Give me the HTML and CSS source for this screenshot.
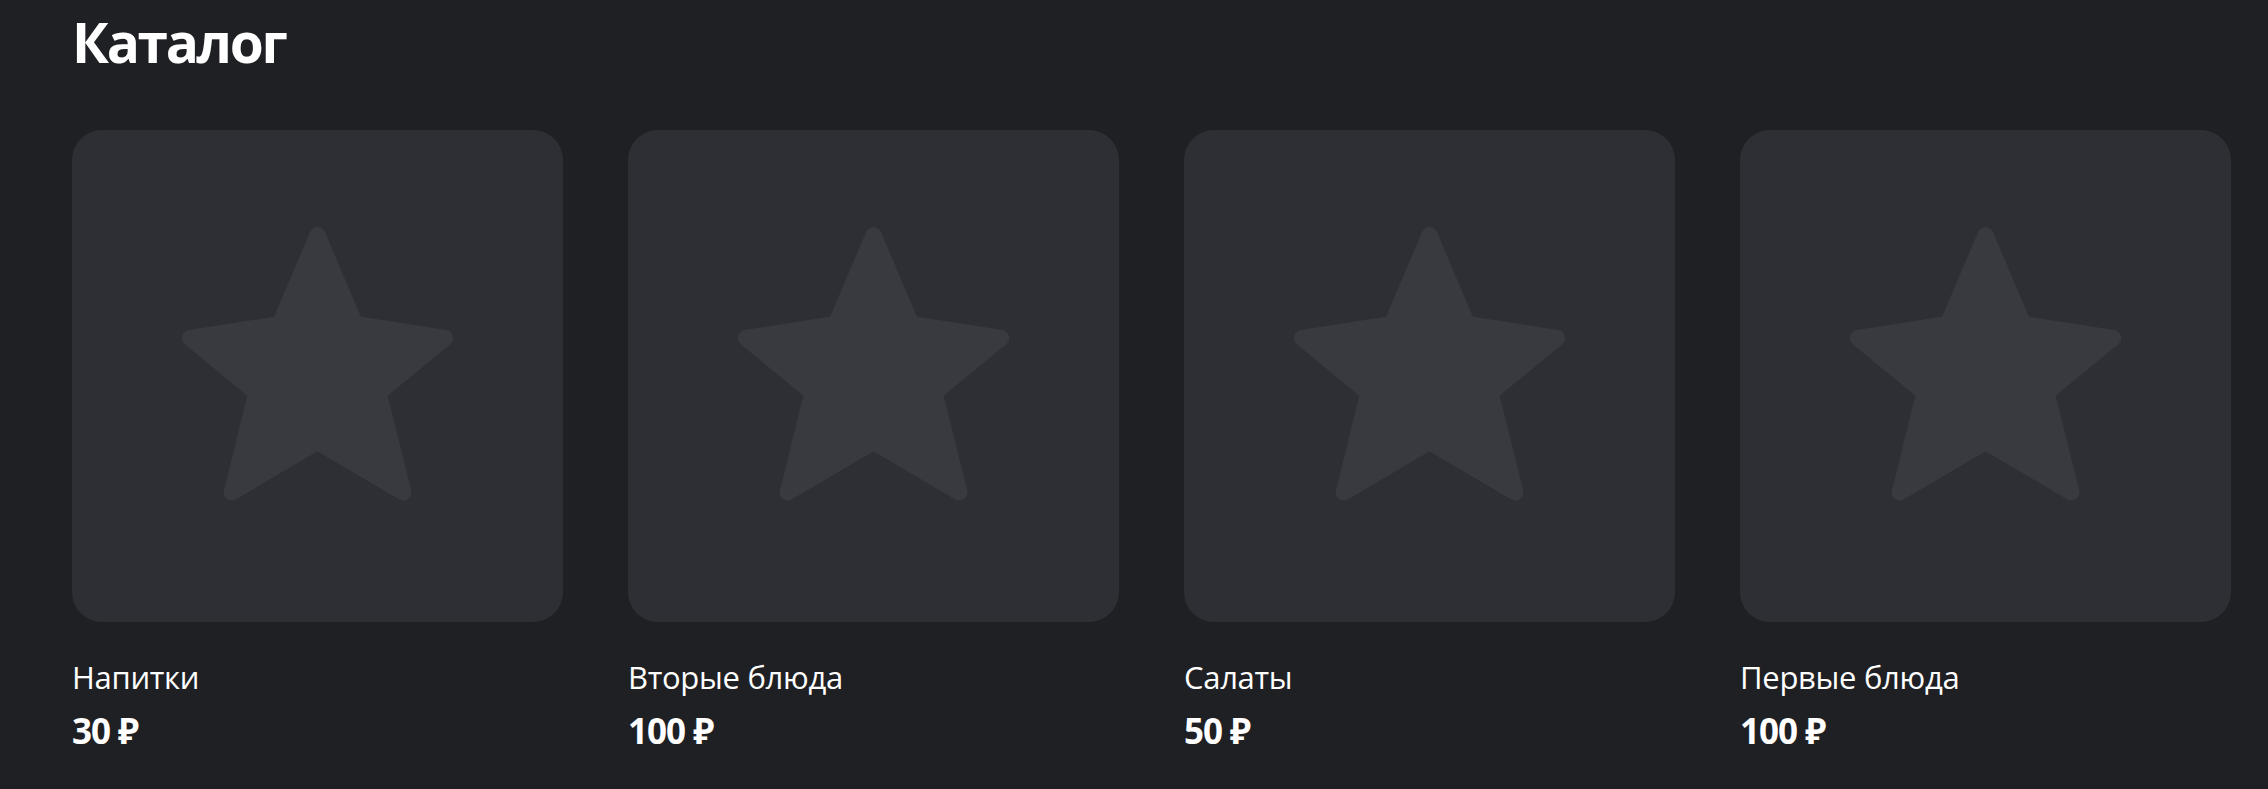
FILE: index.html
```html
<!DOCTYPE html>
<html lang="ru">
<head>
    <meta charset="UTF-8">
    <meta name="viewport" content="width=device-width, initial-scale=1.0">
    <title>Каталог</title>
    <link rel="stylesheet" href="styles.css">
</head>
<body>
    <div id="wrapper">
        <h1 class="title">Каталог</h1>
        <div class="catalog">
            <div class="item">
                <div class="thumb">
                    <svg viewBox="0 0 491 492"><polygon class="star" points="245.5,105 283.3,194 373.2,208 306.6,262.8 331.4,362.5 245.5,312 159.6,362.5 184.4,262.8 117.8,208 207.7,194"/></svg>
                </div>
                <div class="name">Напитки</div>
                <div class="price">30 ₽</div>
            </div>
            <div class="item">
                <div class="thumb">
                    <svg viewBox="0 0 491 492"><polygon class="star" points="245.5,105 283.3,194 373.2,208 306.6,262.8 331.4,362.5 245.5,312 159.6,362.5 184.4,262.8 117.8,208 207.7,194"/></svg>
                </div>
                <div class="name">Вторые блюда</div>
                <div class="price">100 ₽</div>
            </div>
            <div class="item">
                <div class="thumb">
                    <svg viewBox="0 0 491 492"><polygon class="star" points="245.5,105 283.3,194 373.2,208 306.6,262.8 331.4,362.5 245.5,312 159.6,362.5 184.4,262.8 117.8,208 207.7,194"/></svg>
                </div>
                <div class="name">Салаты</div>
                <div class="price">50 ₽</div>
            </div>
            <div class="item">
                <div class="thumb">
                    <svg viewBox="0 0 491 492"><polygon class="star" points="245.5,105 283.3,194 373.2,208 306.6,262.8 331.4,362.5 245.5,312 159.6,362.5 184.4,262.8 117.8,208 207.7,194"/></svg>
                </div>
                <div class="name">Первые блюда</div>
                <div class="price">100 ₽</div>
            </div>
        </div>
    </div>
</body>
</html>
```

FILE: styles.css
```css
body{
    margin: 0;
    background-color: #1f2024;
    color: #ffffff;
    font-family: "Open Sans", "Noto Sans", sans-serif;
}
#wrapper{
    padding: 0 0 0 72px;
}
.title{
    margin: 0;
    padding-top: 6px;
    font-size: 55px;
    font-weight: 700;
    line-height: 72px;
    letter-spacing: -2.3px;
}
.catalog{
    display: grid;
    grid-template-columns: repeat(4, 491px);
    column-gap: 65px;
    margin-top: 52px;
}
.thumb{
    width: 491px;
    height: 492px;
    border-radius: 30px;
    background-color: #2e2f34;
}
.thumb svg{
    display: block;
    width: 100%;
    height: 100%;
}
.star{
    fill: #393a40;
    stroke: #393a40;
    stroke-width: 16;
    stroke-linejoin: round;
}
.name{
    margin-top: 35px;
    font-size: 31px;
    line-height: 40px;
    letter-spacing: -0.3px;
}
.price{
    margin-top: 14px;
    font-size: 35px;
    font-weight: 700;
    line-height: 40px;
    letter-spacing: -1px;
}
```
